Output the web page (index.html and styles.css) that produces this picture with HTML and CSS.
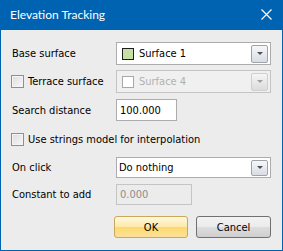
FILE: index.html
```html
<!DOCTYPE html>
<html lang="en">
<head>
  <meta charset="UTF-8">
  <title>Elevation Tracking</title>
  <link rel="stylesheet" href="styles.css">
</head>
<body>

  <div class="window">
    <div class="titlebar">
      <span class="title">Elevation Tracking</span>
      <svg class="close" width="11" height="11" viewBox="0 0 11 11">
        <path d="M0.5 0.5 L10.5 10.5 M10.5 0.5 L0.5 10.5" stroke="#fff" stroke-width="1.2" fill="none"/>
      </svg>
    </div>

    <div class="content">
      <div class="row r1">
        <label class="label">Base surface</label>
        <div class="combo">
          <span class="swatch green"></span>
          <span class="value">Surface 1</span>
          <span class="drop"><i></i></span>
        </div>
      </div>

      <div class="row r2">
        <label class="label check-label"><span class="check"></span>Terrace surface</label>
        <div class="combo disabled">
          <span class="swatch"></span>
          <span class="value">Surface 4</span>
          <span class="drop"><i></i></span>
        </div>
      </div>

      <div class="row r3">
        <label class="label">Search distance</label>
        <div class="field">100.000</div>
      </div>

      <div class="row r4">
        <label class="check-label"><span class="check"></span>Use strings model for interpolation</label>
      </div>

      <div class="row r5">
        <label class="label">On click</label>
        <div class="combo short">
          <span class="value">Do nothing</span>
          <span class="drop"><i></i></span>
        </div>
      </div>

      <div class="row r6">
        <label class="label">Constant to add</label>
        <div class="field wide disabled">0.000</div>
      </div>

      <div class="buttons">
        <button class="btn ok">OK</button>
        <button class="btn">Cancel</button>
      </div>
    </div>
  </div>

</body>
</html>
```

FILE: styles.css
```css
* {
  margin: 0;
  padding: 0;
  box-sizing: border-box;
}

html, body {
  width: 283px;
  height: 251px;
  overflow: hidden;
  background: #ffffff;
  font-family: 'DejaVu Sans Condensed', 'Liberation Sans', sans-serif;
  font-size: 11px;
  color: #000;
}

.window {
  width: 283px;
  height: 251px;
  background: #0063b1;
  padding: 0 1px 1px 1px;
  display: flex;
  flex-direction: column;
}

.titlebar {
  height: 30px;
  display: flex;
  align-items: center;
  justify-content: space-between;
  padding: 0 10px 0 9px;
  color: #fff;
}

.title {
  font-family: Lato, 'Noto Sans', sans-serif;
  font-size: 12px;
  margin-top: -1px;
}

.close {
  margin-top: -1px;
}

.content {
  flex: 1;
  background: #ececec;
  padding: 12px 10px 0 9px;
}

.row {
  display: flex;
  align-items: center;
}

.label {
  width: 106px;
  flex-shrink: 0;
  display: flex;
  align-items: center;
  padding-left: 2px;
}

.check-label {
  display: flex;
  align-items: center;
  white-space: nowrap;
  padding-left: 1px;
}

.check {
  flex-shrink: 0;
  width: 13px;
  height: 13px;
  border: 1px solid #8f8f8f;
  background: linear-gradient(135deg, #dcdcdc, #f8f8f8);
  box-shadow: inset 0 0 0 1px #f4f4f4;
  margin-right: 4px;
}

.r1 { height: 23px; }
.r2 { height: 23px; margin-top: 5px; }
.r3 { height: 22px; margin-top: 6px; }
.r4 { height: 16px; margin-top: 10px; }
.r5 { height: 21px; margin-top: 10px; }
.r6 { height: 21px; margin-top: 6px; }

.combo {
  width: 155px;
  height: 100%;
  border: 1px solid #acacac;
  background: #fff;
  display: flex;
  align-items: center;
  padding-left: 5px;
}

.combo .value {
  flex: 1;
}

.swatch {
  width: 12px;
  height: 12px;
  border: 1px solid #888;
  background: #fff;
  margin-right: 5px;
}

.swatch.green {
  background: #c5e0a5;
  border-color: #1e1e1e;
}

.combo.short {
  padding-left: 2px;
}

.drop {
  width: 17px;
  height: 18px;
  margin-right: 2px;
  border: 1px solid #9ea3aa;
  border-radius: 2px;
  background: linear-gradient(#f6f7f9, #d8dde4);
  display: flex;
  align-items: center;
  justify-content: center;
}

.combo.short .drop {
  height: 16px;
}

.drop i {
  width: 0;
  height: 0;
  border-left: 3px solid transparent;
  border-right: 3px solid transparent;
  border-top: 3px solid #4a4f56;
}

.combo.disabled {
  background: #f0f0f0;
  border-color: #c4c4c4;
  color: #b0b0b0;
}

.combo.disabled .swatch {
  border-color: #a8a8a8;
}

.combo.disabled .drop {
  border-color: #cfcfcf;
  background: linear-gradient(#f5f5f5, #dcdcdc);
}

.combo.disabled .drop i {
  border-top-color: #a0a0a0;
}

.field {
  width: 61px;
  height: 100%;
  border: 1px solid #acacac;
  background: #fff;
  display: flex;
  align-items: center;
  padding-left: 3px;
}

.field.wide {
  width: 76px;
}

.field.disabled {
  background: #ececec;
  border-color: #c4c4c4;
  color: #8c8c8c;
}

.buttons {
  display: flex;
  justify-content: flex-end;
  gap: 8px;
  margin-top: 11px;
  padding-right: 1px;
}

.btn {
  width: 75px;
  height: 22px;
  font-family: 'DejaVu Sans Condensed', 'Liberation Sans', sans-serif;
  font-size: 11px;
  border: 1px solid #707070;
  border-radius: 3px;
  background: linear-gradient(#f2f2f2 0%, #ebebeb 50%, #dddddd 51%, #cfcfcf 100%);
}

.btn.ok {
  width: 74px;
  border-color: #c8a85a;
  background: linear-gradient(#fff8e0 0%, #fee9a8 50%, #fdd96e 51%, #fce19a 100%);
}
```
